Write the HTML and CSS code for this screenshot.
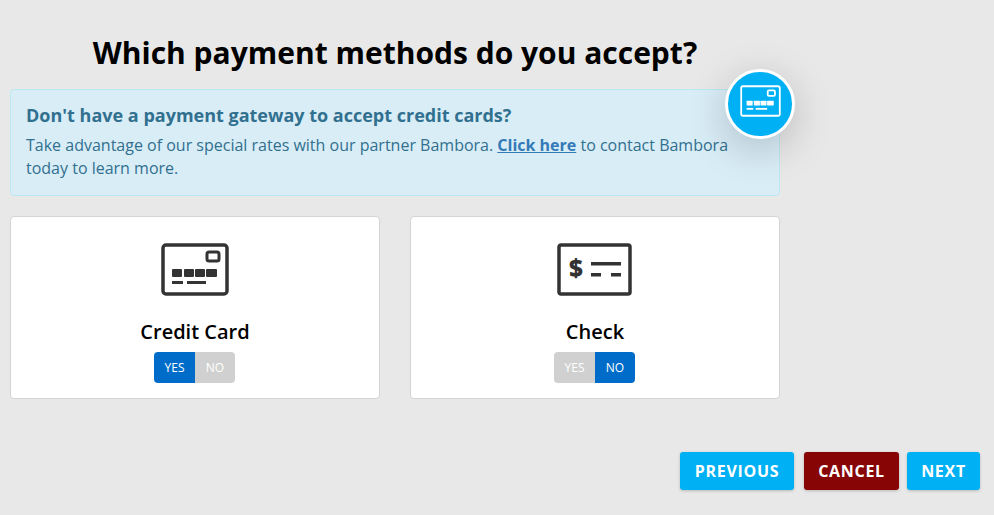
FILE: index.html
```html
<!DOCTYPE html>
<html lang="en">
	<head>
		<meta charset="UTF-8" />
		<meta name="viewport" content="width=device-width, initial-scale=1.0" />
		<title>Payment methods</title>
		<link rel="stylesheet" href="styles.css">
	</head>
	<body>
		<div class="content">
			<h1>Which payment methods do you accept?</h1>

			<div class="alert">
				<h4>Don't have a payment gateway to accept credit cards?</h4>
				<p>Take advantage of our special rates with our partner Bambora. <a href="#">Click here</a> to contact Bambora today to learn more.</p>
				<div class="badge">
					<svg width="41" height="32" viewBox="0 0 68 53" fill="none" stroke="#fff">
						<rect x="2" y="2" width="64" height="49" rx="3" stroke-width="3" />
						<rect x="46" y="9" width="12" height="9" rx="2" stroke-width="3" />
						<g fill="#fff" stroke="none">
							<rect x="11" y="26" width="10" height="8" rx="1" />
							<rect x="23" y="26" width="10" height="8" rx="1" />
							<rect x="34" y="26" width="10" height="8" rx="1" />
							<rect x="45" y="26" width="11" height="8" rx="1" />
							<rect x="11" y="38" width="11" height="3" />
							<rect x="26" y="38" width="19" height="3" />
						</g>
					</svg>
				</div>
			</div>

			<div class="cards">
				<div class="card">
					<svg class="card-icon" width="68" height="53" viewBox="0 0 68 53" fill="none" stroke="#333">
						<rect x="2" y="2" width="64" height="49" rx="3" stroke-width="3.5" />
						<rect x="46" y="9" width="12" height="9" rx="2" stroke-width="3" />
						<g fill="#333" stroke="none">
							<rect x="11" y="26" width="10" height="8" rx="1" />
							<rect x="23" y="26" width="10" height="8" rx="1" />
							<rect x="34" y="26" width="10" height="8" rx="1" />
							<rect x="45" y="26" width="11" height="8" rx="1" />
							<rect x="11" y="38" width="11" height="3" />
							<rect x="26" y="38" width="19" height="3" />
						</g>
					</svg>
					<div class="card-title">Credit Card</div>
					<div class="toggle">
						<span class="on">YES</span>
						<span class="off">NO</span>
					</div>
				</div>
				<div class="card">
					<svg class="card-icon" width="75" height="53" viewBox="0 0 75 53" fill="none" stroke="#333">
						<rect x="2" y="2" width="71" height="49" rx="2" stroke-width="3.5" />
						<text class="dollar" x="19" y="34" text-anchor="middle">$</text>
						<g fill="#333" stroke="none">
							<rect x="34" y="19" width="30" height="3.5" />
							<rect x="34" y="30" width="10" height="3.5" />
							<rect x="54" y="30" width="10" height="3.5" />
						</g>
					</svg>
					<div class="card-title">Check</div>
					<div class="toggle">
						<span class="off">YES</span>
						<span class="on">NO</span>
					</div>
				</div>
			</div>
		</div>

		<div class="footer">
			<button class="btn">PREVIOUS</button>
			<button class="btn btn-cancel">CANCEL</button>
			<button class="btn btn-next">NEXT</button>
		</div>
	</body>
</html>
```

FILE: styles.css
```css
body {
	font-family: "Open Sans", "Liberation Sans", sans-serif;
	margin: 0;
	height: 515px;
	overflow: hidden;
	background-color: #e8e8e8;
}
.content {
	width: 770px;
	margin-left: 10px;
}
h1 {
	margin: 0;
	height: 89px;
	padding-top: 33px;
	box-sizing: border-box;
	font-size: 30px;
	line-height: 40px;
	font-weight: 700;
	text-align: center;
	color: #000;
}
.alert {
	position: relative;
	box-sizing: border-box;
	height: 107px;
	padding: 12px 15px;
	border: 1px solid #bce8f1;
	border-radius: 4px;
	background-color: #d9edf7;
	color: #31708f;
}
.alert h4 {
	margin: 0 0 6px;
	font-size: 18px;
	line-height: 26px;
	font-weight: 700;
}
.alert p {
	margin: 0;
	font-size: 16px;
	line-height: 23px;
}
.alert a {
	font-weight: 700;
	color: #337ab7;
}
.badge {
	position: absolute;
	top: -21px;
	right: -16px;
	box-sizing: border-box;
	width: 70px;
	height: 70px;
	padding-bottom: 7px;
	display: flex;
	justify-content: center;
	align-items: center;
	border: 3px solid #fff;
	border-radius: 50%;
	background-color: #00b0f4;
	box-shadow: 0 10px 40px rgba(0, 0, 0, 0.2);
}
.cards {
	display: flex;
	gap: 30px;
	margin-top: 20px;
}
.card {
	box-sizing: border-box;
	width: 370px;
	height: 183px;
	padding-top: 26px;
	display: flex;
	flex-direction: column;
	align-items: center;
	border: 1px solid #d4d4d4;
	border-radius: 4px;
	background-color: #fff;
}
.card-icon {
	margin-right: 1px;
}
.card-title {
	margin-top: 22px;
	font-size: 20px;
	line-height: 28px;
	font-weight: 600;
	color: #000;
}
.toggle {
	display: flex;
	margin-top: 6px;
	margin-right: 1px;
	height: 31px;
	border-radius: 4px;
	overflow: hidden;
	font-size: 12px;
	line-height: 31px;
	text-align: center;
	color: #fff;
}
.toggle span {
	width: 40px;
}
.toggle span:first-child {
	width: 41px;
}
.toggle .on {
	background-color: #006cc9;
}
.toggle .off {
	background-color: #cfd0cf;
}
.dollar {
	font-family: "Open Sans", sans-serif;
	font-size: 24px;
	font-weight: 800;
	fill: #333;
	stroke: none;
}
.footer {
	display: flex;
	justify-content: flex-end;
	margin-top: 53px;
	padding-right: 14px;
}
.btn {
	height: 38px;
	width: 114px;
	padding: 0;
	border: none;
	border-radius: 3px;
	background-color: #00b0f4;
	box-shadow: 0 1px 3px rgba(0, 0, 0, 0.2);
	font-family: inherit;
	font-size: 16px;
	font-weight: 700;
	letter-spacing: 0.7px;
	color: #fff;
	cursor: pointer;
}
.btn-cancel {
	width: 95px;
	margin-left: 10px;
	background-color: #870505;
}
.btn-next {
	width: 73px;
	margin-left: 8px;
}
```
